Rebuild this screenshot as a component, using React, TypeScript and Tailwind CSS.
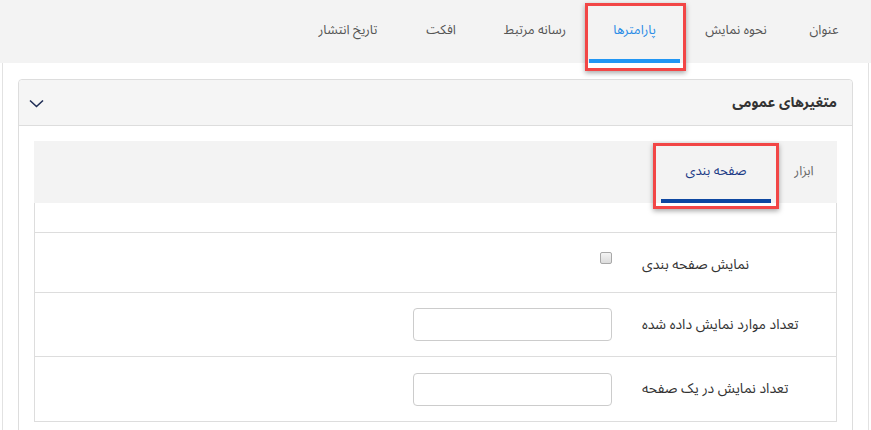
import React from "react";

const topTabs = [
  { label: "عنوان", w: "w-[64px]" },
  { label: "نحوه نمایش", w: "w-[112px]" },
  { label: "پارامترها", w: "w-[91px]", active: true },
  { label: "رسانه مرتبط", w: "w-[108px]" },
  { label: "افکت", w: "w-[80px]" },
  { label: "تاریخ انتشار", w: "w-[106px]" },
];

export default function App() {
  return (
    <div
      dir="rtl"
      className="w-[871px] h-[430px] overflow-hidden bg-white text-[13px] text-[#333]"
      style={{ fontFamily: '"Noto Sans Arabic", "DejaVu Sans", sans-serif' }}
    >
      {/* top tabs */}
      <div className="h-[63px] bg-[#f3f3f3] flex pr-[15px]">
        {topTabs.map((t) => (
          <div
            key={t.label}
            className={`relative ${t.w} h-full flex items-center justify-center ${
              t.active ? "text-[#2b8ce6]" : "text-[#555]"
            }`}
          >
            <span className="-mt-[2px]">{t.label}</span>
            {t.active && (
              <>
                <div className="absolute left-0 right-0 bottom-0 h-[4px] bg-[#2196f3]" />
                <div className="absolute left-[-4px] right-[-6px] top-[3px] bottom-[-8px] border-[3px] border-[#f24646] shadow-[0_2px_5px_rgba(0,0,0,0.35)]" />
              </>
            )}
          </div>
        ))}
      </div>

      {/* content */}
      <div className="mx-[2px] h-[367px] border-x border-[#e2e2e2] px-[15px] pt-[16px]">
        <div className="border border-[#dddddd] rounded-[4px] h-[400px]">
          <div className="h-[46px] bg-[#f5f5f5] border-b border-[#dddddd] rounded-t-[4px] flex items-center justify-between pr-[15px] pl-[10px]">
            <span className="font-bold text-[14px] text-[#333]">متغیرهای عمومی</span>
            <svg width="15" height="9" viewBox="0 0 15 9" className="mt-[1px]">
              <path d="M1 1.5 L7.5 7.5 L14 1.5" fill="none" stroke="#1f2d55" strokeWidth="1.6" />
            </svg>
          </div>
          <div className="px-[15px] pt-[15px]">
            {/* inner tabs */}
            <div className="h-[62px] bg-[#f3f3f3] flex">
              <div className="w-[66px] h-full flex items-center justify-center text-[#666]">
                <span className="-mt-[1px]">ابزار</span>
              </div>
              <div className="relative w-[110px] h-full flex items-center justify-center text-[#1c3a86]">
                <span className="-mt-[1px]">صفحه بندی</span>
                <div className="absolute left-0 right-0 bottom-0 h-[4px] bg-[#0d47a1]" />
                <div className="absolute left-[-8px] right-[-8px] top-[2px] bottom-[-6px] border-[3px] border-[#f24646] shadow-[0_2px_5px_rgba(0,0,0,0.35)]" />
              </div>
            </div>
            {/* tab content */}
            <div className="border-x border-b border-[#dddddd] text-[14px]">
              <div className="h-[30px] border-b border-[#dddddd]" />
              <div className="h-[60px] border-b border-[#dddddd] flex pr-[15px] pt-[19px]">
                <div className="w-[179px] text-left leading-[20px] mt-[3px]">نمایش صفحه بندی</div>
                <div className="w-[199px] mr-[30px]">
                  <div className="w-[12px] h-[12px] rounded-[2px] border border-[#a8a8a8] bg-gradient-to-b from-[#f4f4f4] to-[#dcdcdc]" />
                </div>
              </div>
              <div className="h-[64px] border-b border-[#dddddd] flex items-center pr-[15px]">
                <div className="w-[179px] text-left leading-[20px]">تعداد موارد نمایش داده شده</div>
                <input className="w-[199px] h-[33px] mr-[30px] rounded-[4px] border border-[#cccccc] bg-white outline-none" />
              </div>
              <div className="h-[64px] flex items-center pr-[15px]">
                <div className="w-[179px] text-left leading-[20px]">تعداد نمایش در یک صفحه</div>
                <input className="w-[199px] h-[33px] mr-[30px] rounded-[4px] border border-[#cccccc] bg-white outline-none" />
              </div>
            </div>
          </div>
        </div>
      </div>
    </div>
  );
}
